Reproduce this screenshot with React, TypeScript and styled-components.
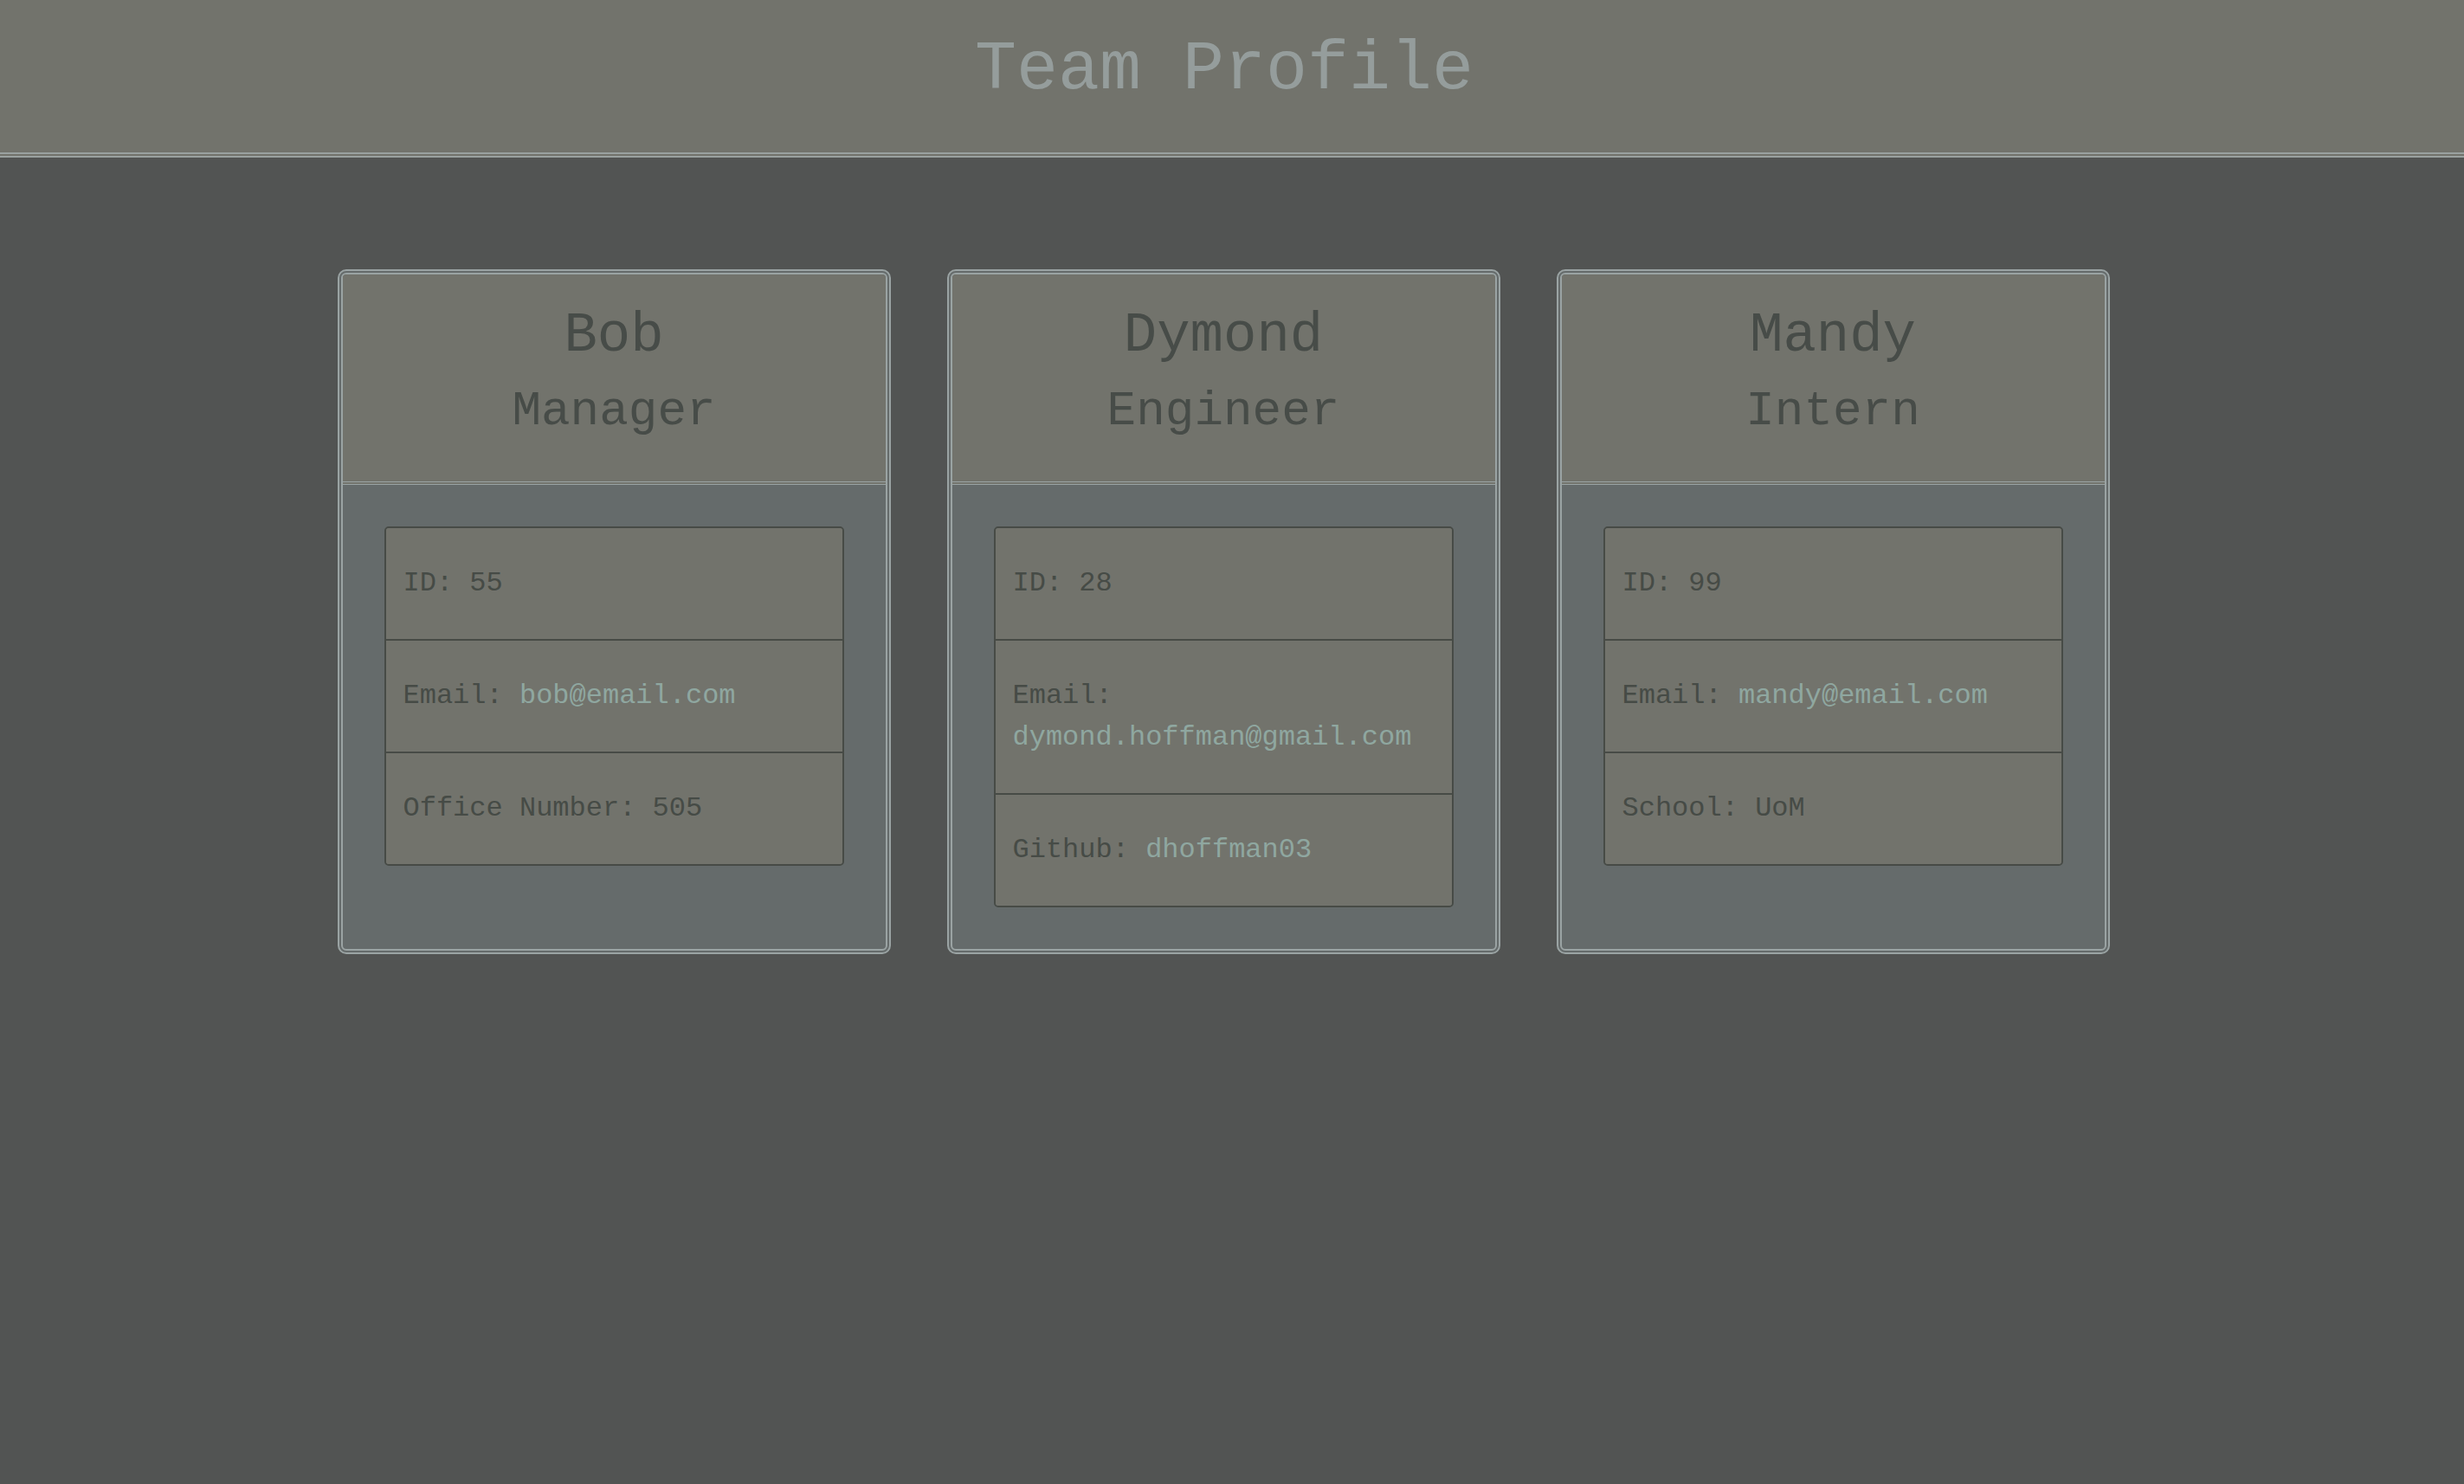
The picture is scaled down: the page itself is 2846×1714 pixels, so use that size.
import React from "react";
import styled, { createGlobalStyle } from "styled-components";

const GlobalStyle = createGlobalStyle`
  html, body {
    margin: 0;
    padding: 0;
    background: #525453;
  }
  body {
    font-family: "Liberation Mono", "Courier New", monospace;
  }
`;

const Page = styled.div`
  min-height: 100vh;
  background: #525453;
  display: flex;
  flex-direction: column;
`;

const Header = styled.header`
  background: #72736c;
  border-bottom: 6px double #9aa1a0;
  height: 176px;
  box-sizing: content-box;
  padding-right: 18px;
  display: flex;
  justify-content: center;
  align-items: flex-start;
`;

const Title = styled.h1`
  margin: 35px 0 0;
  font-family: "Liberation Mono", "Courier New", monospace;
  font-weight: 400;
  font-size: 80px;
  line-height: 91px;
  color: #959d9c;
`;

const CardRow = styled.main`
  display: flex;
  justify-content: center;
  align-items: stretch;
  gap: 65px;
  padding: 129px 20px 0 0;
`;

const Card = styled.section`
  width: 639px;
  box-sizing: border-box;
  border: 6px double #9aa3a3;
  border-radius: 10px;
  background: #656b6b;
  display: flex;
  flex-direction: column;
  overflow: hidden;
`;

const CardHead = styled.div`
  background: #72736c;
  border-bottom: 4px double #9aa3a3;
  padding: 35px 0 49px;
  text-align: center;
  color: #474c48;
`;

const Name = styled.h2`
  margin: 0;
  font-weight: 400;
  font-size: 64px;
  line-height: 72px;
`;

const Role = styled.h3`
  margin: 19px 0 0;
  font-weight: 400;
  font-size: 56px;
  line-height: 64px;
`;

const CardBody = styled.div`
  flex: 1;
  padding: 48px;
`;

const List = styled.ul`
  list-style: none;
  margin: 0;
  padding: 0;
  border: 2px solid #474b46;
  border-radius: 5px;
  overflow: hidden;
`;

const Item = styled.li`
  background: #72736c;
  padding: 40px 20px;
  font-size: 32px;
  line-height: 48px;
  color: #464b46;
  & + & {
    border-top: 2px solid #474b46;
  }
`;

const Link = styled.a`
  color: #8fa7a0;
  text-decoration: none;
`;

type Member = {
  name: string;
  role: string;
  id: number;
  email: string;
  extraLabel: string;
  extraValue: string;
  extraLink?: boolean;
};

const team: Member[] = [
  { name: "Bob", role: "Manager", id: 55, email: "bob@email.com", extraLabel: "Office Number", extraValue: "505" },
  {
    name: "Dymond",
    role: "Engineer",
    id: 28,
    email: "dymond.hoffman@gmail.com",
    extraLabel: "Github",
    extraValue: "dhoffman03",
    extraLink: true,
  },
  { name: "Mandy", role: "Intern", id: 99, email: "mandy@email.com", extraLabel: "School", extraValue: "UoM" },
];

export default function App() {
  return (
    <Page>
      <GlobalStyle />
      <Header>
        <Title>Team Profile</Title>
      </Header>
      <CardRow>
        {team.map((m) => (
          <Card key={m.id}>
            <CardHead>
              <Name>{m.name}</Name>
              <Role>{m.role}</Role>
            </CardHead>
            <CardBody>
              <List>
                <Item>ID: {m.id}</Item>
                <Item>
                  Email: <Link href={`mailto:${m.email}`}>{m.email}</Link>
                </Item>
                <Item>
                  {m.extraLabel}:{" "}
                  {m.extraLink ? <Link href={`https://github.com/${m.extraValue}`}>{m.extraValue}</Link> : m.extraValue}
                </Item>
              </List>
            </CardBody>
          </Card>
        ))}
      </CardRow>
    </Page>
  );
}
